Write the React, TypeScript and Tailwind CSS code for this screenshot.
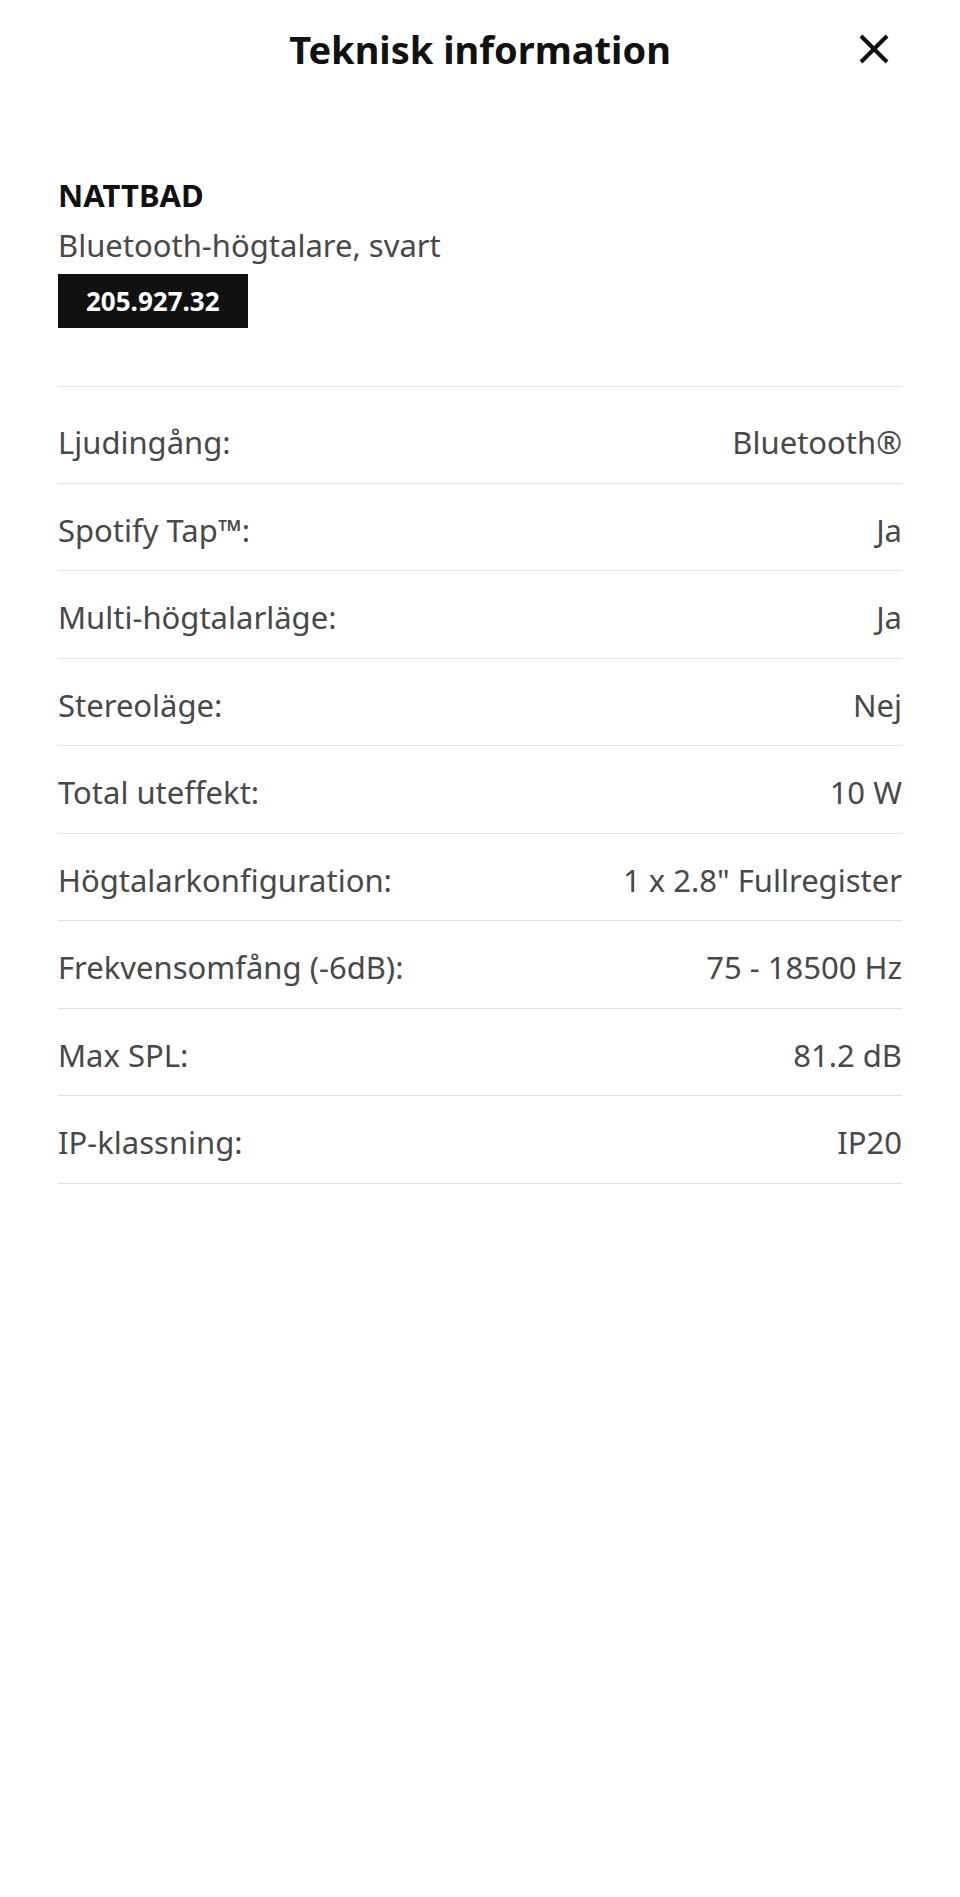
import React from 'react';

const specs = [
    { label: 'Ljudingång:', value: 'Bluetooth®' },
    { label: 'Spotify Tap™:', value: 'Ja' },
    { label: 'Multi-högtalarläge:', value: 'Ja' },
    { label: 'Stereoläge:', value: 'Nej' },
    { label: 'Total uteffekt:', value: '10 W' },
    { label: 'Högtalarkonfiguration:', value: '1 x 2.8" Fullregister' },
    { label: 'Frekvensomfång (-6dB):', value: '75 - 18500 Hz' },
    { label: 'Max SPL:', value: '81.2 dB' },
    { label: 'IP-klassning:', value: 'IP20' },
];

const App = () => {
    return (
        <div className="min-h-[1897px] w-full bg-white text-[#111111]" style={{ fontFamily: '"Noto Sans", "Open Sans", sans-serif' }}>
            <div className="relative flex h-[98px] items-center justify-center">
                <h1 className="text-[38px] font-bold leading-none">Teknisk information</h1>
                <button className="absolute right-[70px] top-[33px] flex h-[32px] w-[32px] items-center justify-center" aria-label="Stäng">
                    <svg width="32" height="32" viewBox="0 0 32 32" fill="none" stroke="#111111" strokeWidth="4" strokeLinecap="butt">
                        <path d="M3 3 L29 29" />
                        <path d="M29 3 L3 29" />
                    </svg>
                </button>
            </div>

            <div className="px-[58px]">
                <div className="pt-[78px]">
                    <div className="text-[31px] font-bold leading-[38px]">NATTBAD</div>
                    <div className="mt-[12px] text-[31px] leading-[38px] text-[#484848]">Bluetooth-högtalare, svart</div>
                    <div className="mt-[10px] inline-flex h-[54px] items-center bg-[#111111] px-[28px] text-[26px] font-bold text-white">
                        205.927.32
                    </div>
                </div>

                <div className="mt-[58px] border-t border-[#dfdfdf] pt-[9px]">
                    {specs.map(spec => (
                        <div key={spec.label} className="flex items-center justify-between border-b border-[#dfdfdf] pt-[24px] pb-[17.5px] text-[31px] leading-[45px] text-[#484848]">
                            <span>{spec.label}</span>
                            <span>{spec.value}</span>
                        </div>
                    ))}
                </div>
            </div>
        </div>
    );
};

export default App;
